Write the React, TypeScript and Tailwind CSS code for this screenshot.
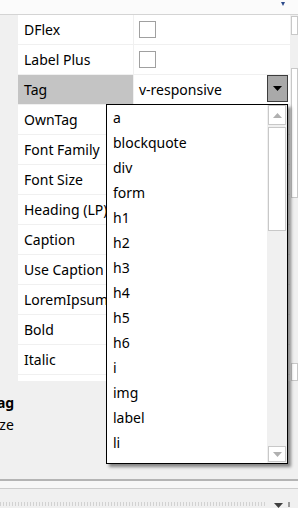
import { useState } from "react";

const props = [
  { name: "DFlex", kind: "check" },
  { name: "Label Plus", kind: "check" },
  { name: "Tag", kind: "select", value: "v-responsive" },
  { name: "OwnTag" },
  { name: "Font Family" },
  { name: "Font Size" },
  { name: "Heading (LP)" },
  { name: "Caption" },
  { name: "Use Caption" },
  { name: "LoremIpsum" },
  { name: "Bold" },
  { name: "Italic" },
  { name: "Underline" },
];

const tags = ["a", "blockquote", "div", "form", "h1", "h2", "h3", "h4", "h5", "h6", "i", "img", "label", "li"];

function UpArrow() {
  return (
    <svg width="9" height="5" viewBox="0 0 9 5">
      <path d="M0 5 L4.5 0 L9 5 Z" fill="#b0b0b0" />
    </svg>
  );
}

function DownArrow({ color = "#b0b0b0" }: { color?: string }) {
  return (
    <svg width="9" height="5" viewBox="0 0 9 5">
      <path d="M0 0 L9 0 L4.5 5 Z" fill={color} />
    </svg>
  );
}

export default function App() {
  const [selected] = useState("Tag");

  return (
    <div className="relative w-[298px] h-[508px] overflow-hidden bg-[#f0f0f0] text-[14px] text-black font-['Noto_Sans',sans-serif]">
      {/* top strip */}
      <div className="h-[15px] bg-[#fbfbfb] border-b border-[#d4d4d4] flex justify-end pr-[13px] pt-[2px]">
        <svg width="4" height="4" viewBox="0 0 4 4">
          <path d="M0 0 L4 0 L2 4 Z" fill="#2b4a8a" />
        </svg>
      </div>

      {/* property grid */}
      <div className="flex h-[366px]">
        <div className="w-[18px]" />
        <div className="w-[272px] bg-white overflow-hidden">
          {props.map((p) => (
            <div key={p.name} className="flex h-[30px] border-b border-[#f0f0f0]">
              <div
                className={`w-[116px] border-r border-[#f0f0f0] pl-[6px] flex items-center whitespace-nowrap overflow-hidden ${
                  p.name === selected ? "bg-[#c4c4c4]" : ""
                }`}
              >
                {p.name}
              </div>
              <div className="flex-1 flex items-center pl-[5px] pr-[2px]">
                {p.kind === "check" && <div className="w-[17px] h-[17px] border border-[#a0a0a0] bg-white" />}
                {p.kind === "select" && (
                  <div className="flex-1 flex justify-between items-start h-full">
                    <span className="leading-[29px]">{p.value}</span>
                    <div className="w-[21px] h-[27px] bg-[#a9a9a9] border border-[#3c3c3c] flex items-center justify-center">
                      <DownArrow color="#000" />
                    </div>
                  </div>
                )}
              </div>
            </div>
          ))}
        </div>
        {/* outer scrollbar */}
        <div className="flex-1 flex flex-col pl-[1px] pt-[1px]">
          <div className="h-[19px] border border-[#c8c8c8] bg-white" />
          <div className="mt-[33px] h-[130px] border border-[#c8c8c8] bg-white" />
          <div className="flex-1" />
          <div className="h-[18px] border border-[#c8c8c8] bg-white" />
        </div>
      </div>

      {/* description */}
      <div className="h-[98px] pt-[11px] -ml-[10px] leading-[22px]">
        <div className="font-bold">Tag</div>
        <div className="-ml-[2px]">Size</div>
      </div>

      {/* bottom bars */}
      <div className="h-[2px] bg-[#b4b4b4]" />
      <div className="h-[7px] bg-[#f7f7f7]" />
      <div className="h-[1px] bg-[#cdcdcd]" />
      <div className="h-[13px]" />
      <div className="flex items-start h-[5px]">
        <div className="w-[266px] h-[4px] bg-[repeating-linear-gradient(90deg,#d2d2d2_0_1px,transparent_1px_3px)]" />
        <div className="ml-[8px] mt-[1px]">
          <DownArrow color="#404040" />
        </div>
        <div className="ml-[5px] w-[2px] h-[5px] bg-[#9a9a9a]" />
      </div>

      {/* open tag list */}
      <div className="absolute left-[106px] top-[104px] w-[182px] h-[360px] bg-white border border-black shadow-[3px_3px_3px_rgba(0,0,0,0.45)] flex">
        <div className="flex-1 overflow-hidden">
          {tags.map((t) => (
            <div key={t} className="h-[25px] leading-[25px] pl-[6px]">
              {t}
            </div>
          ))}
        </div>
        <div className="w-[20px] bg-[#f0f0f0] flex flex-col px-[1px]">
          <div className="h-[20px] border border-[#c8c8c8] bg-white flex items-center justify-center">
            <UpArrow />
          </div>
          <div className="mt-[2px] h-[104px] border border-[#c8c8c8] bg-white" />
          <div className="flex-1" />
          <div className="h-[16px] mb-[1px] border border-[#c8c8c8] bg-white flex items-center justify-center">
            <DownArrow />
          </div>
        </div>
      </div>
    </div>
  );
}
